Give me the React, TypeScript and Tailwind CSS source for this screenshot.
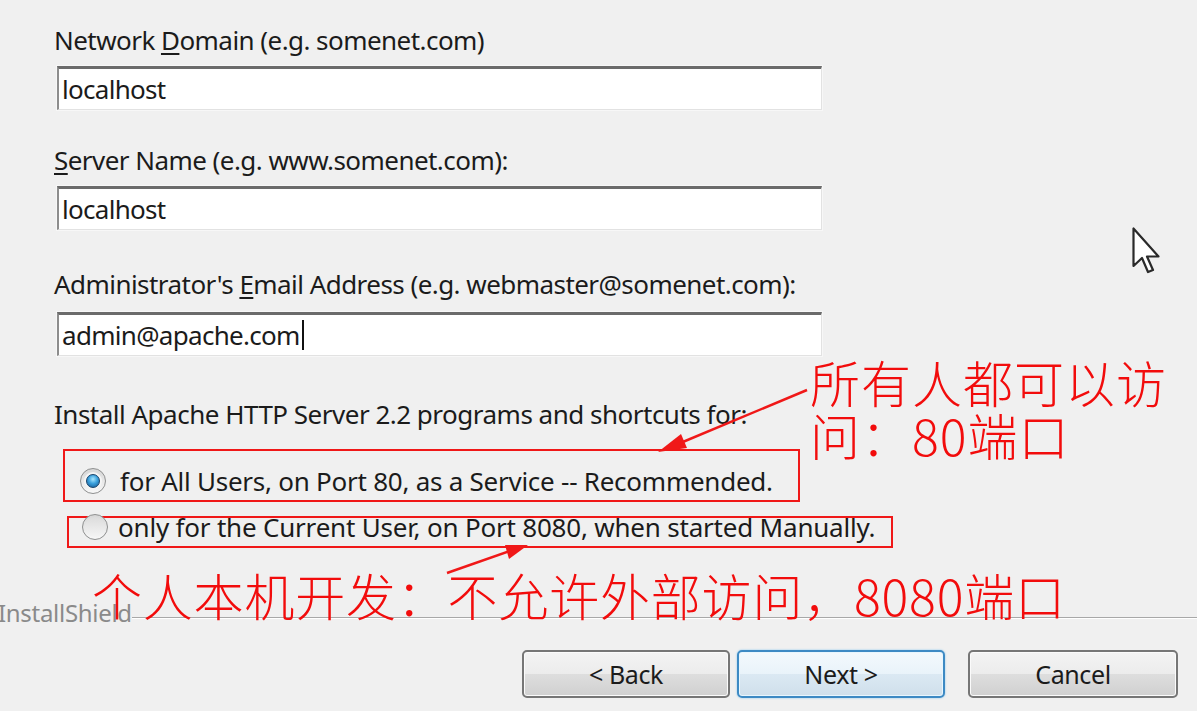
import React from "react";

function Radio({ checked }: { checked: boolean }) {
  return (
    <div className="relative w-[26px] h-[26px] shrink-0 rounded-full border border-[#8e8f8f] bg-[linear-gradient(#d6d6d6,#f8f8f8)] flex items-center justify-center">
      {checked ? (
        <div className="w-[18px] h-[18px] rounded-full bg-[#f4f4f4] flex items-center justify-center">
          <div className="w-[14px] h-[14px] rounded-full border border-[#17426a] bg-[radial-gradient(circle_at_50%_35%,#a8e6fd_0%,#3aa0dc_45%,#12558f_100%)]" />
        </div>
      ) : (
        <div className="w-[20px] h-[20px] rounded-full bg-[linear-gradient(#dcdcdc,#f4f4f4)]" />
      )}
    </div>
  );
}

function Field({ value, caret }: { value: string; caret?: boolean }) {
  return (
    <div className="ml-[3px] w-[765px] h-[44px] bg-white border-t-[3px] border-l-[2px] border-r border-b border-t-[#6b6b6b] border-l-[#8d8d8d] border-r-[#e2e2e2] border-b-[#e2e2e2] shadow-[0_0_0_1px_#f7f7f7] pl-[3px] flex items-center text-[26px] leading-[32px] tracking-[-0.7px]">
      <span>{value}</span>
      {caret && <span className="ml-[2px] w-[2px] h-[30px] bg-[#111]" />}
    </div>
  );
}

function Btn({ label, w, def }: { label: string; w: string; def?: boolean }) {
  return (
    <div
      className={
        "h-[48px] rounded-[5px] flex items-center justify-center text-[25px] leading-[30px] tracking-[-0.4px] text-[#1b1b1b] " +
        w +
        (def
          ? " border-2 border-[#3d8ac4] bg-[linear-gradient(#f3f9fd,#e9f3fa_50%,#dbe9f3_50%,#cfdfeb)] shadow-[inset_0_0_0_1px_#e8f6fe,0_0_2px_#7cc2ee]"
          : " border-2 border-[#767676] bg-[linear-gradient(#f3f3f3,#ececec_50%,#dedede_50%,#d0d0d0)] shadow-[inset_0_0_0_1px_#fbfbfb]")
      }
    >
      {label}
    </div>
  );
}

export default function App() {
  return (
    <div className="relative w-[1197px] h-[711px] overflow-hidden bg-[#f0f0f0] text-[#1b1b1b] font-['Noto_Sans','Open_Sans',sans-serif]">
      <div className="flex flex-col pl-[54px] pt-[24px]">
        <div className="h-[32px] text-[26px] leading-[32px] tracking-[-0.55px]">
          Network <span className="underline underline-offset-[3px]">D</span>omain (e.g. somenet.com)
        </div>
        <div className="mt-[10px]">
          <Field value="localhost" />
        </div>

        <div className="mt-[34px] h-[32px] text-[26px] leading-[32px] tracking-[-0.55px]">
          <span className="underline underline-offset-[3px]">S</span>erver Name (e.g. www.somenet.com):
        </div>
        <div className="mt-[10px]">
          <Field value="localhost" />
        </div>

        <div className="mt-[38px] h-[32px] text-[26px] leading-[32px] tracking-[-0.55px]">
          Administrator's <span className="underline underline-offset-[3px]">E</span>mail Address (e.g. webmaster@somenet.com):
        </div>
        <div className="mt-[12px]">
          <Field value="admin@apache.com" caret />
        </div>

        <div className="mt-[42px] h-[32px] text-[26px] leading-[32px] tracking-[-0.5px]">
          Install Apache HTTP Server 2.2 programs and shortcuts for:
        </div>

        <div className="mt-[19px] ml-[9px] w-[737px] h-[53px] border-2 border-[#f01818] pt-[11px] pl-[15px] flex items-center gap-[14px]">
          <Radio checked />
          <span className="text-[26px] leading-[32px] tracking-[-0.25px]">for All Users, on Port 80, as a Service -- Recommended.</span>
        </div>

        <div className="mt-[14px] ml-[13px] w-[826px] h-[32px] border-2 border-[#f01818] pb-[10px] pl-[13px] flex items-center gap-[10px]">
          <Radio checked={false} />
          <span className="text-[26px] leading-[32px] tracking-[-0.2px]">only for the Current User, on Port 8080, when started Manually.</span>
        </div>
      </div>

      <div className="mt-[50px] flex items-start h-[30px]">
        <span className="text-[24px] leading-[30px] text-[#8a8a8a] -ml-[2px] tracking-[-0.3px]">InstallShield</span>
        <div className="flex-1 mt-[19px] h-[2px] bg-[#a8a8a8] border-b border-white" />
      </div>

      <div className="mt-[22px] flex justify-end pr-[19px]">
        <Btn label="< Back" w="w-[208px]" />
        <div className="w-[7px]" />
        <Btn label="Next >" w="w-[208px]" def />
        <div className="w-[23px]" />
        <Btn label="Cancel" w="w-[210px]" />
      </div>

      {/* annotations */}
      <div className="absolute left-[810px] top-[355px] text-[50px] leading-[53px] tracking-[1px] text-[#f20c0c] font-light font-['Noto_Sans_CJK_SC',sans-serif] whitespace-nowrap">
        所有人都可以访
        <br />
        问：80端口
      </div>
      <div className="absolute left-[92px] top-[568px] text-[50px] leading-[53px] tracking-[0.8px] text-[#f20c0c] font-light font-['Noto_Sans_CJK_SC',sans-serif] whitespace-nowrap">
        个人本机开发：不允许外部访问，8080端口
      </div>

      <svg className="absolute left-0 top-0 pointer-events-none" width="1197" height="711">
        <line x1="807" y1="390" x2="678" y2="444" stroke="#f01818" strokeWidth="2.5" />
        <polygon points="658,452 687,448 681,434" fill="#f01818" />
        <line x1="447" y1="573" x2="510" y2="551" stroke="#f01818" strokeWidth="2.5" />
        <polygon points="528,545 509,559 505,545" fill="#f01818" />
      </svg>

      <svg className="absolute left-[1131px] top-[226px]" width="34" height="50" viewBox="0 0 34 50">
        <path
          d="M2.5 2.5 L2.5 40 L11 32 L17 46 L22 44 L16 30.5 L27.5 30.5 Z"
          fill="#ffffff"
          stroke="#2a2a2a"
          strokeWidth="2.2"
          strokeLinejoin="round"
        />
      </svg>
    </div>
  );
}
